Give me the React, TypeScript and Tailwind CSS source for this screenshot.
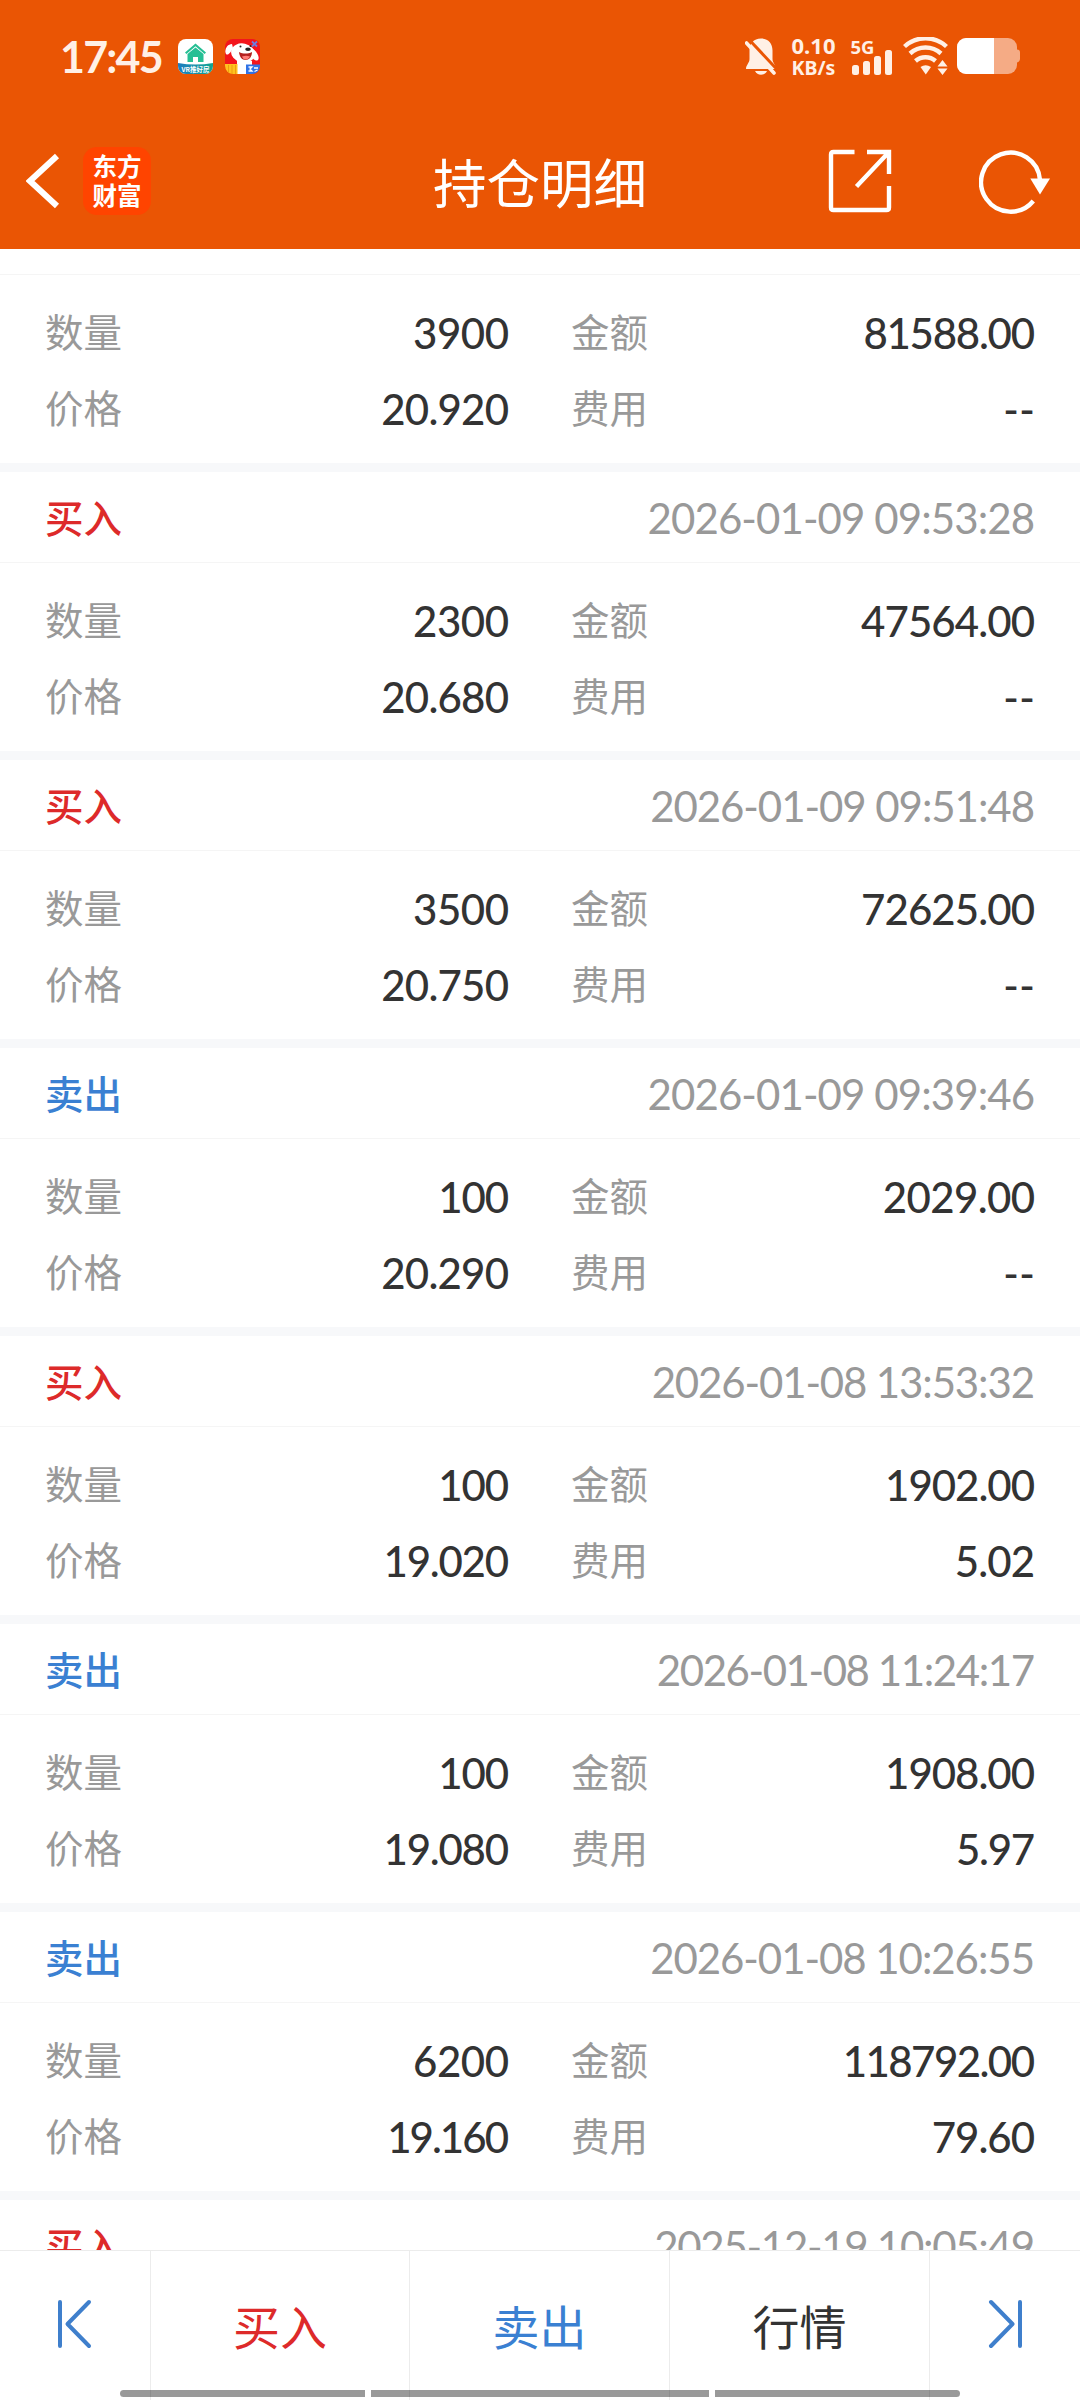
type Trade = {
  side?: 'buy' | 'sell';
  time?: string;
  qty: string;
  amount: string;
  price: string;
  fee: string;
};

const trades: Trade[] = [
  { qty: '3900', amount: '81588.00', price: '20.920', fee: '--' },
  { side: 'buy', time: '2026-01-09 09:53:28', qty: '2300', amount: '47564.00', price: '20.680', fee: '--' },
  { side: 'buy', time: '2026-01-09 09:51:48', qty: '3500', amount: '72625.00', price: '20.750', fee: '--' },
  { side: 'sell', time: '2026-01-09 09:39:46', qty: '100', amount: '2029.00', price: '20.290', fee: '--' },
  { side: 'buy', time: '2026-01-08 13:53:32', qty: '100', amount: '1902.00', price: '19.020', fee: '5.02' },
  { side: 'sell', time: '2026-01-08 11:24:17', qty: '100', amount: '1908.00', price: '19.080', fee: '5.97' },
  { side: 'sell', time: '2026-01-08 10:26:55', qty: '6200', amount: '118792.00', price: '19.160', fee: '79.60' },
];

const NUM = "font-['Lato','Noto_Sans_CJK_SC',sans-serif] whitespace-nowrap";

// Width correction per character, spread over the whole string as letter spacing.
const KERN: Record<string, number> = { '0': 0.3, '1': -4, '.': -1.5, '-': 0.5, ':': -1.5, ' ': -1 };

function Num({ text, className }: { text: string; className: string }) {
  const total = [...text].reduce((sum, c) => sum + (KERN[c] ?? -1.3), 0);
  const spacing = total / text.length;
  return (
    <span className={`${NUM} ${className}`} style={{ letterSpacing: spacing, marginRight: -spacing }}>
      {text}
    </span>
  );
}

function StatusBar() {
  return (
    <div className="flex h-[112px] items-center pl-[60px] pr-[59px] text-[#fff0e6]">
      <span className={`${NUM} w-[118px] pt-[2px] text-[43px] leading-[50px] font-bold tracking-[-1.8px]`}>17:45</span>
      <svg className="size-[35px]" viewBox="0 0 35 35">
        <defs>
          <clipPath id="vr"><rect width="35" height="35" rx="8" /></clipPath>
          <linearGradient id="vrg" x1="0" x2="1"><stop offset="0" stopColor="#1d7cc0" /><stop offset="1" stopColor="#12a58f" /></linearGradient>
        </defs>
        <g clipPath="url(#vr)">
          <rect width="35" height="35" fill="#fff" />
          <path d="M0 24 Q17.500 27 35 24 V35 H0Z" fill="url(#vrg)" />
          <path d="M17.500 4.500 7 13.500l1.400 1.500L17.500 7.300l9.100 7.700L28 13.500Z" fill="#27bf94" />
          <path d="M17.500 8.500 9.500 15v8h5.500v-5h5v5h5.500v-8Z" fill="#27bf94" />
          <text x="17.500" y="33" fontSize="6.500" fontWeight="700" textAnchor="middle" fill="#fff" fontFamily="Noto Sans CJK SC, sans-serif">VR推好房</text>
        </g>
      </svg>
      <svg className="ml-[12px] size-[35px]" viewBox="0 0 35 35">
        <defs><clipPath id="jd"><rect width="35" height="35" rx="8" /></clipPath></defs>
        <g clipPath="url(#jd)">
          <rect width="35" height="35" fill="#f3151c" />
          <path d="M12 22h15v13H12Z" fill="#fff" />
          <ellipse cx="18" cy="14" rx="12" ry="9.500" fill="#fff" transform="rotate(12 18 14)" />
          <path d="M7 5C2 5-1 11 1 15c2 2 5-2 7-6Z" fill="#fff" />
          <path d="M28 10c4 3 7 8 5 11-3 2-6-2-7-6Z" fill="#fff" />
          <path d="M14 13c4 2 9 2 13 0 0 5-3 8-6.500 8S14.500 18 14 13Z" fill="#b3201f" />
          <path d="M17 17.500c3-1 5-1 8 0-1 2-2.500 3-4.500 3S18 19.500 17 17.500Z" fill="#ff7d78" />
          <ellipse cx="23" cy="10.300" rx="2.800" ry="1.700" fill="#222" />
          <circle cx="15.500" cy="7.500" r="1" fill="#222" /><circle cx="25.500" cy="7" r="1" fill="#222" />
          <path d="M27 2.500l5 5M32 2.500l-5 5" stroke="#6d7de0" strokeWidth="1.800" />
          <rect y="25" width="12.500" height="10" fill="#ffc21e" />
          <path d="M3.500 26v9M7 26v9M10.500 26v9" stroke="#ef9c10" strokeWidth="1" />
          <rect x="21" y="25.500" width="14" height="10" fill="#2f73e6" />
          <path d="M23.500 28h3.500l-2 2 2 2h-3.500M29 29h4M29.500 32.500l3-1.500" stroke="#fff" strokeWidth="1.300" fill="none" />
        </g>
      </svg>

      <div className="ml-auto flex items-center">
        <svg className="h-[37px] w-[32px]" viewBox="0 0 32 37">
          <path d="M16 0.500C8.500 0.500 4.500 6 4.500 12.500V21C4.500 25 1 27 1 31h30c0-4-3.500-6-3.500-10v-8.500C27.500 6 23.500 0.500 16 0.500Z" fill="#fff0e6" />
          <path d="M10 33h12c-1 2.400-3.500 3.700-6 3.700S11 35.400 10 33Z" fill="#fff0e6" />
          <path d="M4 1.500 33 32.500" stroke="#ea5504" strokeWidth="3" />
          <path d="M1.500 5 29 35" stroke="#fff0e6" strokeWidth="3.600" strokeLinecap="round" />
        </svg>
        <div className="ml-[14px] flex w-[45px] flex-col items-center font-['Noto_Sans','Noto_Sans_CJK_SC',sans-serif] font-bold whitespace-nowrap">
          <span className="text-[22px] leading-[22px]">0.10</span>
          <span className="text-[19.500px] leading-[23px]">KB/s</span>
        </div>
        <svg className="ml-[14px] h-[40px] w-[44px] overflow-visible" viewBox="0 0 44 40">
          <text x="0.500" y="17.500" fontSize="18.500" fontWeight="700" fill="#fff0e6" fontFamily="Noto Sans, sans-serif" textLength="24">5G</text>
          <g fill="#fff0e6">
            <rect x="2" y="29" width="7" height="10" rx="2.500" />
            <rect x="13" y="25" width="7" height="14" rx="2.500" />
            <rect x="24" y="20" width="7" height="19" rx="2.500" />
            <rect x="35" y="14" width="7" height="25" rx="2.500" />
          </g>
        </svg>
        <svg className="ml-[9px] h-[38px] w-[46px]" viewBox="0 0 46 38">
          <g fill="none" stroke="#fff0e6" strokeWidth="4.400">
            <path d="M1.500 9.500A31 31 0 0 1 43.500 9.500" />
            <path d="M7 16.500A23 23 0 0 1 38 16.500" />
            <path d="M12.500 24A15 15 0 0 1 32.500 24" />
          </g>
          <path d="M17.500 30q5-3.500 10.500 0L22.800 37.500Z" fill="#fff0e6" />
          <path d="M34.500 29.500h10L39.500 23ZM34.500 31.500h10L39.500 38Z" fill="#fff0e6" />
        </svg>
        <svg className="ml-[8px] h-[36px] w-[64px]" viewBox="0 0 64 36">
          <defs><clipPath id="bat"><rect width="60" height="36" rx="9" /></clipPath></defs>
          <g clipPath="url(#bat)">
            <rect width="60" height="36" fill="#f5ab85" />
            <rect width="37" height="36" fill="#fff" />
          </g>
          <path d="M60 11.500q3 0 3 3v6q0 3-3 4Z" fill="#f5ab85" />
        </svg>
      </div>
    </div>
  );
}

function NavBar() {
  return (
    <div className="grid h-[137px] grid-cols-[1fr_auto_1fr] items-center">
      <div className="flex items-center pl-[26px]">
        <svg className="h-[56px] w-[34px]" viewBox="0 0 34 56">
          <path d="M31 3 4 28 31 53" fill="none" stroke="#fff" strokeWidth="6" />
        </svg>
        <div className="ml-[23px] flex size-[68px] flex-col items-center justify-center rounded-[14px] bg-[#ff4400] pb-[1px] font-['Noto_Sans_CJK_SC',sans-serif] text-[24.500px] leading-[29px] font-bold text-white">
          <span>东方</span>
          <span>财富</span>
        </div>
      </div>
      <h1 className="font-['Noto_Sans_CJK_SC',sans-serif] text-[53.500px] leading-[60px] font-normal text-white">持仓明细</h1>
      <div className="flex items-center justify-end pr-[28px]">
        <svg className="size-[64px]" viewBox="0 0 64 64" fill="none" stroke="#fff" strokeWidth="4.400">
          <path d="M26.500 3H5.500Q3 3 3 5.500V58.500Q3 61 5.500 61H58.500Q61 61 61 58.500V37" />
          <path d="M39 3H61V25M61 3 28.500 37.500" />
        </svg>
        <svg className="ml-[87px] h-[66px] w-[73px]" viewBox="0 0 73 66">
          <path d="M54.300 53A29.500 29.500 0 1 1 61 32" fill="none" stroke="#fff" strokeWidth="4.400" />
          <path d="M51.300 30.500H71L61 46.500Z" fill="#fff" />
        </svg>
      </div>
    </div>
  );
}

function Field({ label, value }: { label: string; value: string }) {
  return (
    <div className="flex h-[76px] items-center justify-between">
      <span className="pb-[6px] font-['Noto_Sans_CJK_SC',sans-serif] text-[38.500px] leading-[50px] text-[#999]">{label}</span>
      <Num text={value} className="text-[42px] leading-[50px] font-medium text-[#333]" />
    </div>
  );
}

function CardHeader({ side, time }: { side: 'buy' | 'sell'; time: string }) {
  return (
    <div className="flex h-[90px] shrink-0 items-center justify-between pt-[2px] pr-[45px] pl-[45px]">
      <span className={`pb-[4px] font-['Noto_Sans_CJK_SC',sans-serif] text-[38.500px] leading-[50px] font-medium ${side === 'buy' ? 'text-[#dd2a2a]' : 'text-[#3a80d2]'}`}>
        {side === 'buy' ? '买入' : '卖出'}
      </span>
      <Num text={time} className="text-[42px] leading-[50px] text-[#999]" />
    </div>
  );
}

function TradeCard({ t }: { t: Trade }) {
  return (
    <section className="shrink-0 border-b-[9px] border-[#f7f8fa]">
      {t.side && t.time ? <CardHeader side={t.side} time={t.time} /> : <div className="h-[25px]" />}
      <div className="grid h-[189px] grid-cols-[464px_464px] content-start gap-x-[62px] border-t border-[#f5f5f5] pt-[20px] pl-[45px]">
        <Field label="数量" value={t.qty} />
        <Field label="金额" value={t.amount} />
        <Field label="价格" value={t.price} />
        <Field label="费用" value={t.fee} />
      </div>
    </section>
  );
}

function BottomBar() {
  const tab = "flex items-center justify-center border-l border-[#ececec] pb-[1px] font-['Noto_Sans_CJK_SC',sans-serif] text-[47px] leading-[60px]";
  return (
    <nav className="relative grid h-[150px] shrink-0 grid-cols-[150px_259px_260px_260px_1fr] border-t border-[#ececec] bg-white">
      <div className="flex items-center pb-[4px] pl-[57px]">
        <svg className="h-[50px] w-[36px]" viewBox="0 0 36 50" fill="none" stroke="#3f7fcc" strokeWidth="4" strokeLinecap="round" strokeLinejoin="round">
          <path d="M3 3V47M32 3 10.500 25 32 47" />
        </svg>
      </div>
      <div className={`${tab} text-[#dd2a2a]`}>买入</div>
      <div className={`${tab} text-[#3a80d2]`}>卖出</div>
      <div className={`${tab} text-[#333]`}>行情</div>
      <div className="flex items-center border-l border-[#ececec] pb-[4px] pl-[56px]">
        <svg className="h-[50px] w-[38px]" viewBox="0 0 38 50" fill="none" stroke="#3f7fcc" strokeWidth="4" strokeLinecap="round" strokeLinejoin="round">
          <path d="M34 3V47M5 3 26.500 25 5 47" />
        </svg>
      </div>
      <div className="absolute bottom-[3px] left-[120px] flex gap-[6px]">
        <div className="h-[7px] w-[245px] rounded-l-full bg-black/40" />
        <div className="h-[7px] w-[338px] bg-black/40" />
        <div className="h-[7px] w-[245px] rounded-r-full bg-black/40" />
      </div>
    </nav>
  );
}

export default function App() {
  return (
    <div className="flex h-[2400px] w-[1080px] flex-col overflow-hidden bg-white">
      <header className="h-[249px] shrink-0 bg-[#ea5504]">
        <StatusBar />
        <NavBar />
      </header>
      <main className="flex min-h-0 flex-1 flex-col overflow-hidden">
        {trades.map((t, i) => (
          <TradeCard key={i} t={t} />
        ))}
        <CardHeader side="buy" time="2025-12-19 10:05:49" />
      </main>
      <BottomBar />
    </div>
  );
}
